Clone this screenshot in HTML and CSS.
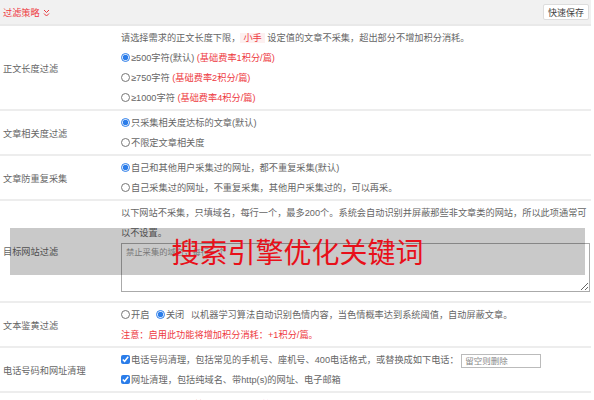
FILE: index.html
```html
<!DOCTYPE html>
<html lang="zh-CN">
<head>
  <meta charset="UTF-8">
  <title>过滤策略</title>
  <link rel="stylesheet" href="styles.css">
</head>
<body>

<div class="panel">
  <div class="panel-head">
    <span class="panel-title">过滤策略
      <svg class="chevron" width="7" height="8" viewBox="0 0 7 8"><path d="M1 1 L3.5 3.5 L6 1 M1 4.5 L3.5 7 L6 4.5" fill="none" stroke="#e8383d" stroke-width="1"/></svg>
    </span>
    <button class="btn-save">快速保存</button>
  </div>

  <!-- 正文长度 -->
  <div class="row">
    <div class="label">正文长度过滤</div>
    <div class="field">
      <div>请选择需求的正文长度下限，<span class="hl">小手</span> 设定值的文章不采集，超出部分不增加积分消耗。</div>
      <label><input type="radio" name="len" checked>≥500字符(默认) <span class="red">(基础费率1积分/篇)</span></label>
      <label><input type="radio" name="len">≥750字符 <span class="red">(基础费率2积分/篇)</span></label>
      <label><input type="radio" name="len">≥1000字符 <span class="red">(基础费率4积分/篇)</span></label>
    </div>
  </div>

  <div class="row">
    <div class="label">文章相关度过滤</div>
    <div class="field">
      <label><input type="radio" name="rel" checked>只采集相关度达标的文章(默认)</label>
      <label><input type="radio" name="rel">不限定文章相关度</label>
    </div>
  </div>

  <div class="row">
    <div class="label">文章防重复采集</div>
    <div class="field">
      <label><input type="radio" name="dup" checked>自己和其他用户采集过的网址，都不重复采集(默认)</label>
      <label><input type="radio" name="dup">自己采集过的网址，不重复采集，其他用户采集过的，可以再采。</label>
    </div>
  </div>

  <div class="row">
    <div class="label">目标网站过滤</div>
    <div class="field">
      <div>以下网站不采集，只填域名，每行一个，最多200个。系统会自动识别并屏蔽那些非文章类的网站，所以此项通常可以不设置。</div>
      <textarea class="domains" placeholder="禁止采集的域名，每行一个"></textarea>
    </div>
    <!-- watermark over the row -->
    <div class="watermark">搜索引擎优化关键词</div>
  </div>

  <div class="row">
    <div class="label">文本鉴黄过滤</div>
    <div class="field">
      <div>
        <label class="inline"><input type="radio" name="porn">开启</label>
        <label class="inline"><input type="radio" name="porn" checked>关闭</label>
        以机器学习算法自动识别色情内容，当色情概率达到系统阈值，自动屏蔽文章。
      </div>
      <div class="red">注意：启用此功能将增加积分消耗：+1积分/篇。</div>
    </div>
  </div>

  <div class="row">
    <div class="label">电话号码和网址清理</div>
    <div class="field">
      <label><input type="checkbox" checked>电话号码清理，包括常见的手机号、座机号、400电话格式，或替换成如下电话： <input type="text" class="phone" placeholder="留空则删除"></label>
      <label><input type="checkbox" checked>网址清理，包括纯域名、带http(s)的网址、电子邮箱</label>
    </div>
  </div>

  <div class="row">
    <div class="label">图片水印过滤</div>
    <div class="field">
      <div>
        <label class="inline"><input type="radio" name="img">开启</label>
        <label class="inline"><input type="radio" name="img" checked>关闭</label>
        <span class="red">(基础费率+1积分/篇)</span> <span class="red">仅对图片生效</span>
      </div>
    </div>
  </div>
</div>

</body>
</html>
```

FILE: styles.css
```css
body {
  margin: 0;
  font-family: "Liberation Sans", "Noto Sans CJK SC", sans-serif;
  font-size: 9.2px;
  color: #666;
  background-color: #fff;
}

.panel {
  width: 591px;
}

.panel-head {
  display: flex;
  justify-content: space-between;
  align-items: center;
  height: 24px;
  padding: 0 2px 0 3px;
  background-color: #f1f1f1;
  border-bottom: 2px solid #e9e9e9;
}

.panel-title {
  color: #ee3a3f;
}

.chevron {
  vertical-align: -1px;
  margin-left: 1px;
}

.btn-save {
  font: inherit;
  font-size: 9px;
  color: #444;
  background-color: #fff;
  border: 1px solid #ddd;
  border-radius: 2px;
  height: 16px;
  padding: 0 4px;
}

.row {
  position: relative;
  display: flex;
  align-items: center;
  border-bottom: 2px solid #ededed;
}

.label {
  width: 118px;
  padding-left: 3px;
}

.field {
  flex: 1;
  padding: 2px 0 1px;
  line-height: 20px;
}

.field label {
  display: block;
}

.field label.inline {
  display: inline;
  margin-right: 4px;
}

input[type="radio"],
input[type="checkbox"] {
  width: 9px;
  height: 9px;
  margin: 0 1px 0 0;
  vertical-align: -1px;
  accent-color: #2b7de9;
}

.red {
  color: #ee3a3f;
}

.hl {
  color: #ee3a3f;
  background-color: #fdf0f0;
  padding: 0 3px;
}

.domains {
  display: block;
  box-sizing: border-box;
  width: 469px;
  height: 49px;
  margin: 0 0 8px;
  padding: 2px 4px;
  border: 1px solid #aaa;
  font-family: inherit;
  font-size: 8.3px;
  line-height: 12px;
}

.domains::placeholder {
  color: #999;
}

.phone {
  box-sizing: border-box;
  width: 80px;
  height: 14px;
  padding: 0 3px;
  border: 1px solid #bbb;
  font-family: inherit;
  font-size: 8.5px;
  vertical-align: middle;
}

.phone::placeholder {
  color: #888;
}

.watermark {
  position: absolute;
  left: 10px;
  top: 27px;
  width: 575px;
  height: 47px;
  background-color: rgba(0, 0, 0, 0.21);
  color: #e8101a;
  font-family: "Noto Sans CJK SC", sans-serif;
  font-size: 28px;
  line-height: 47px;
  text-align: center;
}
```
